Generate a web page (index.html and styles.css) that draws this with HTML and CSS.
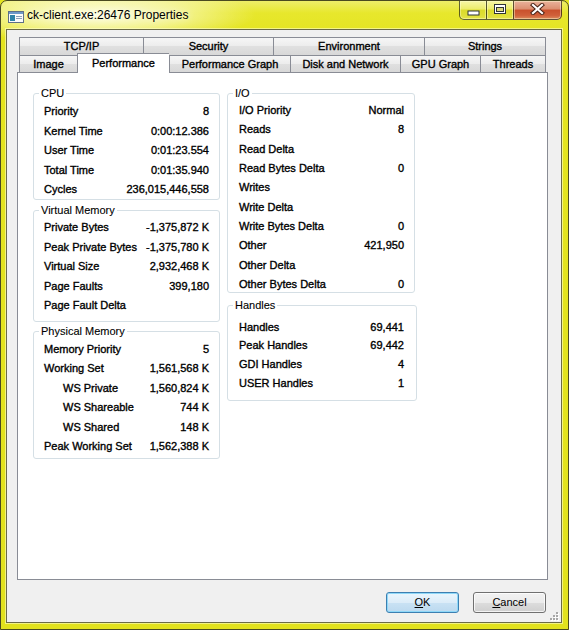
FILE: index.html
```html
<!DOCTYPE html>
<html>
<head>
<meta charset="utf-8">
<link rel="stylesheet" href="styles.css">
</head>
<body>
<div class="window">
  <div class="titlebar">
    <svg class="app-icon" width="16" height="12" viewBox="0 0 16 12">
      <rect x="0.5" y="0.5" width="15" height="11" fill="#fbfbfb" stroke="#5d6f86"/>
      <rect x="1" y="1" width="14" height="2" fill="#6d98c8"/>
      <rect x="2" y="4" width="5" height="6" fill="#2f84a8"/>
      <rect x="8" y="5" width="6" height="1" fill="#8aa0b8"/>
      <rect x="8" y="7" width="6" height="1" fill="#8aa0b8"/>
    </svg>
    <span class="title">ck-client.exe:26476 Properties</span>
    <div class="caption">
      <div class="cb cb-min">
        <svg width="13" height="6" viewBox="0 0 13 6"><rect x="1" y="1" width="11" height="4" fill="#fff" stroke="#2e3436" stroke-width="1"/></svg>
      </div>
      <div class="cb cb-max">
        <svg width="12" height="10" viewBox="0 0 12 10"><rect x="0.5" y="0.5" width="11" height="9" fill="#fff" stroke="#2e3436"/><rect x="2.5" y="3.5" width="7" height="4" fill="#d9d77a" stroke="#2e3436"/></svg>
      </div>
      <div class="cb cb-close">
        <svg width="15" height="12" viewBox="0 0 15 12"><path d="M3 2 L12 10 M12 2 L3 10" stroke="#4a2418" stroke-width="4.2" stroke-linecap="square"/><path d="M3 2 L12 10 M12 2 L3 10" stroke="#fff" stroke-width="2.2" stroke-linecap="square"/></svg>
      </div>
    </div>
  </div>
  <div class="client">
    <div class="tabctl">
      <div class="tabs">
        <div class="tabrow back">
          <div class="tab w-tcp">TCP/IP</div>
          <div class="tab w-sec">Security</div>
          <div class="tab w-env">Environment</div>
          <div class="tab w-str last">Strings</div>
        </div>
        <div class="tabrow front">
          <div class="tab w-img">Image</div>
          <div class="tab w-perf sel">Performance</div>
          <div class="tab w-pg">Performance Graph</div>
          <div class="tab w-dn">Disk and Network</div>
          <div class="tab w-gpu">GPU Graph</div>
          <div class="tab w-thr last">Threads</div>
        </div>
      </div>
      <div class="page">
        <div class="col col-left">
          <div class="gb gb-cpu">
            <div class="gb-title">CPU</div>
            <div class="row"><span class="lbl">Priority</span><span class="val">8</span></div>
            <div class="row"><span class="lbl">Kernel Time</span><span class="val">0:00:12.386</span></div>
            <div class="row"><span class="lbl">User Time</span><span class="val">0:01:23.554</span></div>
            <div class="row"><span class="lbl">Total Time</span><span class="val">0:01:35.940</span></div>
            <div class="row"><span class="lbl">Cycles</span><span class="val">236,015,446,558</span></div>
          </div>
          <div class="gb gb-vm">
            <div class="gb-title">Virtual Memory</div>
            <div class="row"><span class="lbl">Private Bytes</span><span class="val">-1,375,872 K</span></div>
            <div class="row"><span class="lbl">Peak Private Bytes</span><span class="val">-1,375,780 K</span></div>
            <div class="row"><span class="lbl">Virtual Size</span><span class="val">2,932,468 K</span></div>
            <div class="row"><span class="lbl">Page Faults</span><span class="val">399,180</span></div>
            <div class="row"><span class="lbl">Page Fault Delta</span><span class="val"></span></div>
          </div>
          <div class="gb gb-pm">
            <div class="gb-title">Physical Memory</div>
            <div class="row"><span class="lbl">Memory Priority</span><span class="val">5</span></div>
            <div class="row"><span class="lbl">Working Set</span><span class="val">1,561,568 K</span></div>
            <div class="row sub"><span class="lbl">WS Private</span><span class="val">1,560,824 K</span></div>
            <div class="row sub"><span class="lbl">WS Shareable</span><span class="val">744 K</span></div>
            <div class="row sub"><span class="lbl">WS Shared</span><span class="val">148 K</span></div>
            <div class="row"><span class="lbl">Peak Working Set</span><span class="val">1,562,388 K</span></div>
          </div>
        </div>
        <div class="col col-right">
          <div class="gb gb-io">
            <div class="gb-title">I/O</div>
            <div class="row"><span class="lbl">I/O Priority</span><span class="val">Normal</span></div>
            <div class="row"><span class="lbl">Reads</span><span class="val">8</span></div>
            <div class="row"><span class="lbl">Read Delta</span><span class="val"></span></div>
            <div class="row"><span class="lbl">Read Bytes Delta</span><span class="val">0</span></div>
            <div class="row"><span class="lbl">Writes</span><span class="val"></span></div>
            <div class="row"><span class="lbl">Write Delta</span><span class="val"></span></div>
            <div class="row"><span class="lbl">Write Bytes Delta</span><span class="val">0</span></div>
            <div class="row"><span class="lbl">Other</span><span class="val">421,950</span></div>
            <div class="row"><span class="lbl">Other Delta</span><span class="val"></span></div>
            <div class="row"><span class="lbl">Other Bytes Delta</span><span class="val">0</span></div>
          </div>
          <div class="gb gb-h">
            <div class="gb-title">Handles</div>
            <div class="row"><span class="lbl">Handles</span><span class="val">69,441</span></div>
            <div class="row"><span class="lbl">Peak Handles</span><span class="val">69,442</span></div>
            <div class="row"><span class="lbl">GDI Handles</span><span class="val">4</span></div>
            <div class="row"><span class="lbl">USER Handles</span><span class="val">1</span></div>
          </div>
        </div>
      </div>
    </div>
    <div class="buttons">
      <div class="btn default"><u>O</u>K</div>
      <div class="btn"><u>C</u>ancel</div>
    </div>
    <svg class="grip" width="9" height="9" viewBox="0 0 9 9">
      <g fill="#fff"><rect x="7" y="1" width="2" height="2"/><rect x="4" y="4" width="2" height="2"/><rect x="7" y="4" width="2" height="2"/><rect x="1" y="7" width="2" height="2"/><rect x="4" y="7" width="2" height="2"/><rect x="7" y="7" width="2" height="2"/></g>
      <g fill="#a7a7a7"><rect x="6" y="0" width="2" height="2"/><rect x="3" y="3" width="2" height="2"/><rect x="6" y="3" width="2" height="2"/><rect x="0" y="6" width="2" height="2"/><rect x="3" y="6" width="2" height="2"/><rect x="6" y="6" width="2" height="2"/></g>
    </svg>
  </div>
</div>
</body>
</html>
```
FILE: styles.css
```css
* { box-sizing: border-box; }
html, body { margin: 0; padding: 0; }
body {
  width: 569px;
  height: 630px;
  overflow: hidden;
  font-family: "Liberation Sans", Arial, sans-serif;
  font-size: 11px;
  color: #000;
  background: #e4e420;
}
.window {
  width: 569px;
  height: 630px;
  border: 1px solid #4a4a20;
  border-radius: 7px 7px 0 0;
  background:
    radial-gradient(ellipse 160px 28px at 95px 14px, rgba(255,255,240,0.95), rgba(255,255,235,0.5) 55%, rgba(255,255,235,0) 100%),
    linear-gradient(to bottom, #eded6a 0px, #e7e72c 12px, #e4e41f 40px, #e2e21d 100%);
  display: flex;
  flex-direction: column;
}
.titlebar {
  height: 28px;
  display: flex;
  align-items: flex-start;
  padding-left: 7px;
  padding-right: 6px;
}
.app-icon { margin-top: 10px; flex: none; }
.title {
  margin-left: 3px;
  margin-top: 7px;
  line-height: 15px;
  font-size: 12px;
  color: #000;
  text-shadow: 0 0 6px rgba(255,255,255,0.9);
}
.caption {
  margin-left: auto;
  display: flex;
  height: 19px;
}
.cb {
  height: 19px;
  border: 1px solid rgba(50,50,20,0.75);
  border-top: none;
  display: flex;
  align-items: center;
  justify-content: center;
  box-shadow: inset 0 0 0 1px rgba(255,255,210,0.45);
  background: linear-gradient(to bottom, rgba(250,250,190,0.7) 0%, rgba(240,240,140,0.55) 45%, rgba(205,205,30,0.5) 50%, rgba(225,225,90,0.6) 100%);
}
.cb-min { width: 28px; border-bottom-left-radius: 5px; }
.cb-max { width: 28px; margin-left: -1px; }
.cb-close {
  width: 49px;
  margin-left: -1px;
  border-bottom-right-radius: 5px;
  background: linear-gradient(to bottom, #eab39c 0%, #dc8e70 45%, #c9502c 50%, #d0603a 80%, #dc8a5c 100%);
}
.cb-min svg { margin-top: 5px; }
.cb-max svg { margin-top: -2px; }
.cb-close svg { margin-top: -2px; }

.client {
  position: relative;
  margin: 0 6px 0 5px;
  height: 594px;
  border: 1px solid #6b6b45;
  background: #f0f0f0;
  box-shadow: 0 0 0 1px rgba(255,255,200,0.6);
  padding: 7px 0 0 10px;
}
.tabctl { width: 531px; }
.tabs { padding-left: 2px; }
.tabrow { display: flex; }
.tabrow.back { height: 18px; }
.tabrow.front { height: 17px; align-items: flex-end; }
.tab {
  height: 18px;
  border-top: 1px solid #898c95;
  border-left: 1px solid #898c95;
  background: linear-gradient(to bottom, #f6f6f6 0%, #ececec 50%, #e0e0e0 50%, #d8d8d8 100%);
  text-align: center;
  line-height: 17px;
  white-space: nowrap;
  -webkit-text-stroke: 0.35px #000;
}
.tabrow.front .tab { height: 17px; line-height: 16px; }
.tab.last { border-right: 1px solid #898c95; }
.tabrow.front .tab.sel {
  position: relative;
  z-index: 1;
  height: 20px;
  margin-bottom: -1px;
  background: #fff;
  line-height: 18px;
}
.w-tcp { width: 124px; }
.w-sec { width: 130px; }
.w-env { width: 151px; }
.w-str { width: 122px; }
.w-img { width: 58px; }
.w-perf { width: 92px; }
.w-pg { width: 121px; }
.w-dn { width: 110px; }
.w-gpu { width: 80px; }
.w-thr { width: 66px; }

.page {
  height: 508px;
  border: 1px solid #898c95;
  background: #fff;
  padding: 20px 0 0 15px;
  display: flex;
  align-items: flex-start;
  gap: 7px;
}
.col { display: flex; flex-direction: column; }
.col-left { width: 187px; }
.col-right { width: 190px; }

.gb {
  position: relative;
  border: 1px solid #d5dfe5;
  border-radius: 3px;
  padding: 0 10px 0 10px;
}
.gb-title {
  position: absolute;
  top: -8px;
  left: 5px;
  padding: 0 2px;
  line-height: 14px;
  background: #fff;
  white-space: nowrap;
  -webkit-text-stroke: 0.1px #000;
}
.row {
  display: flex;
  justify-content: space-between;
  align-items: center;
  height: 19.5px;
  white-space: nowrap;
  -webkit-text-stroke: 0.35px #000;
}
.row.sub .lbl { padding-left: 19px; }

.gb-cpu { height: 107px; padding-top: 7.3px; }
.gb-vm { height: 112px; padding-top: 6.3px; margin-top: 10px; }
.gb-pm { height: 128px; padding-top: 7.3px; margin-top: 9px; }
.gb-pm .row { height: 19.4px; }
.gb-io { width: 188px; height: 200px; padding-top: 6.3px; padding-left: 11px; }
.gb-io .row { height: 19.33px; }
.gb-h { width: 190px; height: 96px; padding-top: 11.3px; margin-top: 12px; padding-left: 11px; padding-right: 12px; }
.gb-h .row { height: 18.7px; }

.buttons {
  display: flex;
  justify-content: flex-end;
  gap: 14px;
  padding-right: 15px;
  margin-top: 12px;
}
.btn {
  width: 73px;
  height: 21px;
  border: 1px solid #707070;
  border-radius: 3px;
  background: linear-gradient(to bottom, #f2f2f2 0%, #ebebeb 50%, #dddddd 50%, #cfcfcf 100%);
  box-shadow: inset 0 0 0 1px rgba(255,255,255,0.75);
  text-align: center;
  line-height: 19px;
}
.btn.default {
  border-color: #3c7fb1;
  box-shadow: inset 0 0 0 1px #8fd8f8;
  background: linear-gradient(to bottom, #eaf6fd 0%, #dcecf8 50%, #c9e2f4 50%, #bcd9ef 100%);
}
.btn u { text-decoration: underline; text-underline-offset: 1px; }
.grip {
  position: absolute;
  right: 2px;
  bottom: 1px;
}
```
